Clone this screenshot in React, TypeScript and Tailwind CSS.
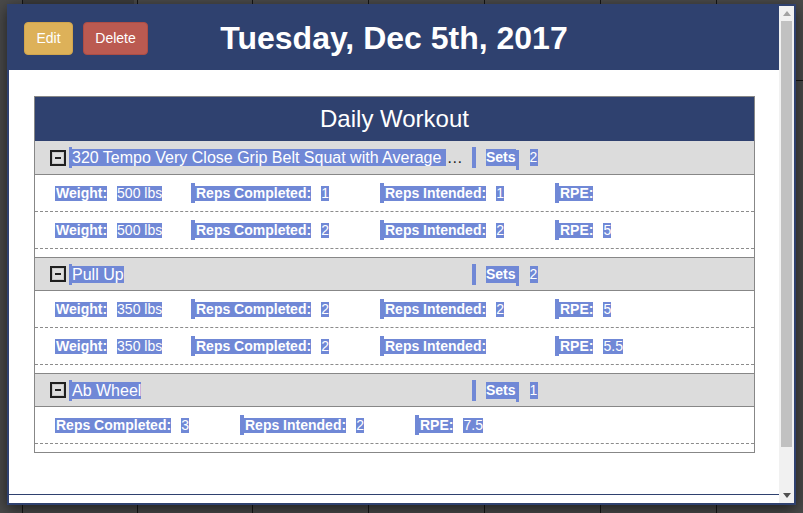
import React from "react"

type Cell = { label: string; value: string; width: string; bar: boolean }
type Exercise = { name: string; more: boolean; sets: string; rows: Cell[][] }

// four-column set row used by weighted movements
const weighted = (w: string, rc: string, ri: string, rpe: string): Cell[] => [
  { label: "Weight:", value: w, width: "w-[136px]", bar: false },
  { label: "Reps Completed:", value: rc, width: "w-[189px]", bar: true },
  { label: "Reps Intended:", value: ri, width: "w-[175px]", bar: true },
  { label: "RPE:", value: rpe, width: "w-auto", bar: true },
]

const exercises: Exercise[] = [
  {
    name: "320 Tempo Very Close Grip Belt Squat with Average",
    more: true,
    sets: "2",
    rows: [weighted("500 lbs", "1", "1", ""), weighted("500 lbs", "2", "2", "5")],
  },
  {
    name: "Pull Up",
    more: false,
    sets: "2",
    rows: [weighted("350 lbs", "2", "2", "5"), weighted("350 lbs", "2", "", "5.5")],
  },
  {
    name: "Ab Wheel",
    more: false,
    sets: "1",
    rows: [
      [
        { label: "Reps Completed:", value: "3", width: "w-[185px]", bar: false },
        { label: "Reps Intended:", value: "2", width: "w-[175px]", bar: true },
        { label: "RPE:", value: "7.5", width: "w-auto", bar: true },
      ],
    ],
  },
]

function MinusBox() {
  return (
    <svg width="16" height="16" viewBox="0 0 16 16" className="shrink-0">
      <rect x="1" y="1" width="14" height="14" fill="#c9c9c9" stroke="#1f1f1f" strokeWidth="2" />
      <rect x="3" y="3" width="10" height="10" fill="#dedede" />
      <rect x="5" y="7" width="6" height="2" fill="#222" />
    </svg>
  )
}

function SetRow({ cells }: { cells: Cell[] }) {
  return (
    <div className="h-[37px] border-b border-dashed border-[#8c8c8c] flex items-center pl-[20px] text-[14px]">
      {cells.map((c, i) => (
        <div key={i} className={`${c.width} flex items-center shrink-0`}>
          {c.bar && <span className="w-[4px] h-[20px] bg-[#7088d6]" />}
          <span className="bg-[#7088d6] text-white font-bold leading-[15px] pl-[1px]">{c.label}</span>
          {c.value && (
            <span className="ml-[10px] bg-[#7088d6] text-white leading-[15px]">{c.value}</span>
          )}
        </div>
      ))}
    </div>
  )
}

function ExerciseGroup({ ex, first }: { ex: Exercise; first: boolean }) {
  return (
    <div className="mb-2">
      <div
        className={
          first
            ? "h-[34px] border-b border-[#878787] bg-[#dcdcdc] flex items-center pl-[15px]"
            : "h-[34px] border-y border-[#878787] bg-[#dcdcdc] flex items-center pl-[15px]"
        }
      >
        <MinusBox />
        <div className="w-[403px] flex items-center ml-[3px] text-[16px]">
          <span className="w-[3px] h-[21px] bg-[#7088d6]" />
          <span className="bg-[#7088d6] text-white leading-[17px] whitespace-nowrap">
            {ex.name}
            {ex.more ? "\u00a0" : ""}
          </span>
          {ex.more && <span className="text-[#222] ml-[1px]">…</span>}
        </div>
        <div className="flex items-center text-[14px]">
          <span className="w-[4px] h-[21px] bg-[#7088d6]" />
          <span className="ml-[10px] bg-[#7088d6] text-white font-bold leading-[17px]">Sets</span>
          <span className="w-[3px] h-[20px] mt-[4px] bg-[#7088d6]" />
          <span className="ml-[11px] bg-[#7088d6] text-white leading-[17px] pr-[1px]">{ex.sets}</span>
        </div>
      </div>
      {ex.rows.map((r, i) => (
        <SetRow key={i} cells={r} />
      ))}
    </div>
  )
}

export default function App() {
  return (
    <div className="relative w-[803px] h-[513px] overflow-hidden bg-[#4a4a4a] font-['Liberation_Sans',Arial,sans-serif]">
      {/* calendar behind the overlay */}
      <div className="flex h-full">
        <div className="w-[23px] shrink-0 border-r border-[#151515]" />
        <div className="w-[115px] shrink-0 border-r border-[#151515]">
          <div className="h-[80px] mr-[3px] bg-[#3c3c3c]" />
        </div>
        <div className="w-[115px] shrink-0 border-r border-[#151515]" />
        <div className="w-[116px] shrink-0 border-r border-[#151515]" />
        <div className="w-[116px] shrink-0 border-r border-[#151515]" />
        <div className="w-[116px] shrink-0 border-r border-[#151515]" />
        <div className="w-[116px] shrink-0 border-r border-[#151515]" />
        <div className="flex-1">
          <div className="h-[81px] border-b border-[#151515]" />
        </div>
      </div>

      {/* modal */}
      <div className="absolute left-[7px] top-[4px] w-[789px] h-[501px] border-2 border-[#2f416f] bg-white flex shadow-[0_4px_14px_rgba(0,0,0,0.6)]">
        <div className="flex-1 flex flex-col min-w-0">
          <header className="h-16 bg-[#2f416f] grid grid-cols-[1fr_auto_1fr] items-center px-[15px]">
            <div className="flex gap-[10px]">
              <button className="h-[33px] w-[49px] rounded-[4px] bg-[#ddb159] border border-[#d2a54c] text-white text-[14px]">
                Edit
              </button>
              <button className="h-[33px] w-[65px] rounded-[4px] bg-[#bb5a51] border border-[#ad4d45] text-white text-[14px]">
                Delete
              </button>
            </div>
            <h1 className="text-white font-bold text-[32px] leading-none">Tuesday, Dec 5th, 2017</h1>
            <div />
          </header>

          <div className="flex-1 pt-[26px] pl-[25px] pr-[24px]">
            <div className="border border-[#878787]">
              <div className="h-[44px] bg-[#2f416f] flex items-center justify-center text-white text-[24px]">
                Daily Workout
              </div>
              {exercises.map((ex, i) => (
                <ExerciseGroup key={i} ex={ex} first={i === 0} />
              ))}
            </div>
          </div>

          <div className="h-[9px] border-t border-[#2f416f]" />
        </div>

        {/* scrollbar */}
        <div className="w-[15px] bg-[#f1f1f1] flex flex-col items-center">
          <div className="h-[15px] flex items-center justify-center">
            <svg width="8" height="5" viewBox="0 0 8 5">
              <path d="M0 5 L4 0 L8 5 Z" fill="#a3a3a3" />
            </svg>
          </div>
          <div className="w-[11px] h-[426px] bg-[#c1c1c1]" />
          <div className="flex-1" />
          <div className="h-[15px] flex items-center justify-center">
            <svg width="8" height="5" viewBox="0 0 8 5">
              <path d="M0 0 L8 0 L4 5 Z" fill="#505050" />
            </svg>
          </div>
        </div>
      </div>
    </div>
  )
}
